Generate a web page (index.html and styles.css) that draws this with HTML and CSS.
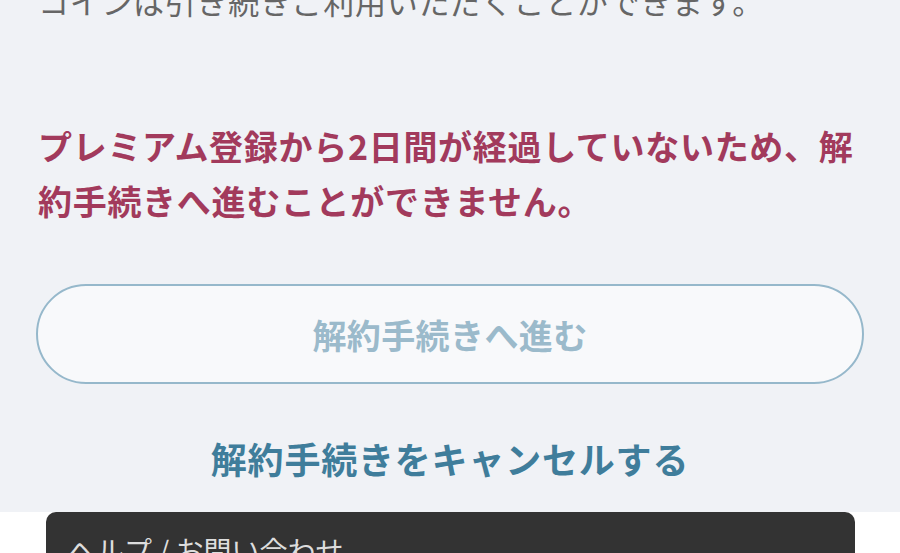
FILE: index.html
```html
<!DOCTYPE html>
<html lang="ja">
<head>
    <meta charset="UTF-8">
    <meta name="viewport" content="width=device-width, initial-scale=1.0">
    <title>解約手続き</title>
    <link rel="stylesheet" href="styles.css">
</head>
<body>
    <div class="content">
        <p class="note">コインは引き続きご利用いただくことができます。</p>

        <p class="warning">プレミアム登録から2日間が経過していないため、解約手続きへ進むことができません。</p>

        <button class="proceed" type="button" disabled>解約手続きへ進む</button>

        <a class="cancel" href="#">解約手続きをキャンセルする</a>
    </div>

    <div class="footer">
        <div class="help">
            <p class="help-title">ヘルプ / お問い合わせ</p>
        </div>
    </div>
</body>
</html>
```

FILE: styles.css
```css
body {
    margin: 0;
    padding: 0;
    font-family: "Noto Sans CJK JP", "Noto Sans", sans-serif;
    background-color: #fff;
    overflow: hidden;
}

.content {
    background-color: #f0f2f6;
    padding: 0 36px;
    height: 512px;
    display: flex;
    flex-direction: column;
}

.note {
    margin: -22px 0 0 2px;
    font-size: 31px;
    line-height: 46px;
    letter-spacing: 0.7px;
    color: #666;
}

.warning {
    margin: 94px 0 0 2px;
    font-size: 34px;
    line-height: 55px;
    letter-spacing: 0.7px;
    font-weight: bold;
    color: #a23a5c;
}

.proceed {
    margin-top: 56px;
    height: 100px;
    border: 2px solid #96b8cb;
    border-radius: 50px;
    background-color: #f8f9fb;
    color: #9bbacb;
    font-family: inherit;
    font-size: 34px;
    letter-spacing: 0.4px;
    font-weight: bold;
}

.cancel {
    margin-top: 48px;
    text-align: center;
    font-size: 36px;
    line-height: 52px;
    letter-spacing: 0.8px;
    font-weight: bold;
    color: #3f7d9b;
    text-decoration: none;
}

.footer {
    padding: 0 45px 0 46px;
}

.help {
    background-color: #333;
    border-radius: 10px 10px 0 0;
    padding: 18px 22px;
    height: 200px;
}

.help-title {
    margin: 0;
    font-size: 28px;
    color: #ddd;
}
```
